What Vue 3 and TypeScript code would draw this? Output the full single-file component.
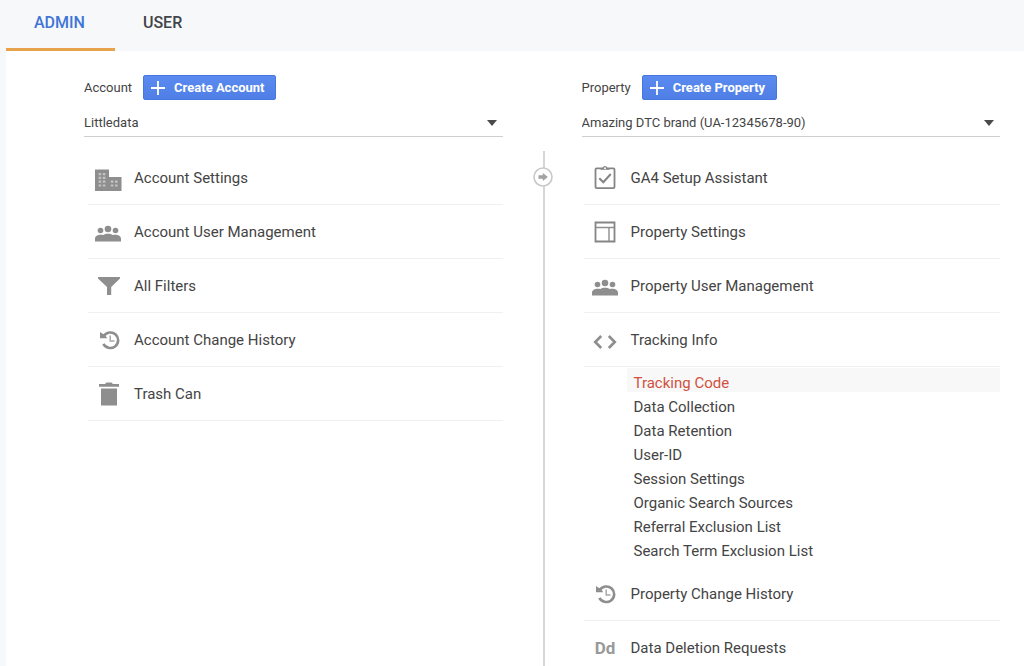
<script setup lang="ts">
import { ref } from 'vue'

type IconName = 'building' | 'people' | 'filter' | 'history' | 'trash' | 'check' | 'layout' | 'code' | 'dd'

interface Item {
  label: string
  icon: IconName
  children?: string[]
}

interface Column {
  id: string
  title: string
  action: string
  selected: string
  items: Item[]
}

const tabs: string[] = ['ADMIN', 'USER']
const activeTab = ref('ADMIN')
const activeChild = ref('Tracking Code')

const columns: Column[] = [
  {
    id: 'account',
    title: 'Account',
    action: 'Create Account',
    selected: 'Littledata',
    items: [
      { label: 'Account Settings', icon: 'building' },
      { label: 'Account User Management', icon: 'people' },
      { label: 'All Filters', icon: 'filter' },
      { label: 'Account Change History', icon: 'history' },
      { label: 'Trash Can', icon: 'trash' },
    ],
  },
  {
    id: 'property',
    title: 'Property',
    action: 'Create Property',
    selected: 'Amazing DTC brand (UA-12345678-90)',
    items: [
      { label: 'GA4 Setup Assistant', icon: 'check' },
      { label: 'Property Settings', icon: 'layout' },
      { label: 'Property User Management', icon: 'people' },
      {
        label: 'Tracking Info',
        icon: 'code',
        children: [
          'Tracking Code',
          'Data Collection',
          'Data Retention',
          'User-ID',
          'Session Settings',
          'Organic Search Sources',
          'Referral Exclusion List',
          'Search Term Exclusion List',
        ],
      },
      { label: 'Property Change History', icon: 'history' },
      { label: 'Data Deletion Requests', icon: 'dd' },
    ],
  },
]
</script>

<template>
  <div class="page">
    <nav class="tabs">
      <button
        v-for="tab in tabs"
        :key="tab"
        type="button"
        class="tab"
        :class="{ active: tab === activeTab }"
        @click="activeTab = tab"
      >{{ tab }}</button>
    </nav>

    <main class="panel">
      <template v-for="(col, index) in columns" :key="col.id">
        <div v-if="index > 0" class="divider">
          <button type="button" class="knob" aria-label="Move between columns">
            <svg viewBox="0 0 20 20" width="20" height="20">
              <circle cx="10" cy="10" r="9" fill="#fff" stroke="#c8c8c8" stroke-width="1.6" />
              <path d="M5.500 8.200h4.300V6l5 4-5 4v-2.200H5.500z" fill="#a2a2a2" />
            </svg>
          </button>
        </div>

        <section class="column" :class="col.id">
          <div class="head">
            <label :for="col.id">{{ col.title }}</label>
            <button type="button" class="create">
              <svg viewBox="0 0 14 14" width="14" height="14"><path d="M7 0v14M0 7h14" stroke="#fff" stroke-width="1.8" /></svg>
              {{ col.action }}
            </button>
          </div>

          <div class="picker">
            <select :id="col.id"><option>{{ col.selected }}</option></select>
            <svg class="caret" viewBox="0 0 10 6" width="10" height="6"><path d="M0 0h10L5 6z" fill="#4a4a4a" /></svg>
          </div>

          <ul class="items">
            <li v-for="item in col.items" :key="item.label">
              <a href="#" class="row" @click.prevent>
                <span class="icon">
                  <svg v-if="item.icon === 'building'" class="low" viewBox="0 0 28 24" width="28" height="24">
                    <path d="M1 1.500h14v7.500h12.500V23H1z" fill="#8e8e8e" />
                    <path d="M4.600 5h2.600v2.200H4.600zM8.800 5h2.600v2.200H8.800zM4.600 8.800h2.600V11H4.600zM8.800 8.800h2.600V11H8.800zM4.600 12.600h2.600v2.200H4.600zM8.800 12.600h2.600v2.200H8.800zM4.600 16.400h2.600v2.200H4.600zM8.800 16.400h2.600v2.200H8.800zM16.800 12.600h2.600v2.200h-2.600zM21 12.600h2.600v2.200H21zM16.800 16.400h2.600v2.200h-2.600zM21 16.400h2.600v2.200H21z" fill="#c2c2c2" />
                  </svg>
                  <svg v-else-if="item.icon === 'people'" class="low" viewBox="0 0 28 18" width="28" height="18">
                    <g fill="#8e8e8e">
                      <circle cx="6.500" cy="5.500" r="2.800" />
                      <circle cx="14" cy="4" r="3.300" />
                      <circle cx="21.500" cy="5.500" r="2.800" />
                      <path d="M1 16.500v-3c0-2.500 3-3.800 5.500-3.800 1.200 0 2 .2 2.800.3C10.500 9.100 12 8.700 14 8.700s3.500.4 4.700 1.300c.8-.1 1.600-.3 2.800-.3 2.500 0 5.500 1.300 5.500 3.800v3z" />
                    </g>
                  </svg>
                  <svg v-else-if="item.icon === 'filter'" viewBox="0 0 22 20" width="22" height="20">
                    <path d="M0 1h22v1.500L13.200 11v8H9v-8L0 2.500z" fill="#8e8e8e" />
                  </svg>
                  <svg v-else-if="item.icon === 'history'" class="shift" viewBox="0 0 20 20" width="20" height="20">
                    <path d="M3.800 6A7.800 7.800 0 1 1 3.400 13.800" fill="none" stroke="#8e8e8e" stroke-width="2.600" />
                    <path d="M0 2l2.200 1.500L4.500 4.500l2.800 3.700H0z" fill="#8e8e8e" />
                    <path d="M10.200 5.500V11h4.300" fill="none" stroke="#a8a8a8" stroke-width="1.500" />
                  </svg>
                  <svg v-else-if="item.icon === 'trash'" viewBox="0 0 20 24" width="20" height="24">
                    <path d="M0 2h6l1.500-1.500h5L14 2h6v2.800H0zM2 6.500h16V23.500H2z" fill="#8e8e8e" />
                  </svg>
                  <svg v-else-if="item.icon === 'check'" class="high" viewBox="0 0 22 24" width="22" height="24">
                    <path d="M2.500 3.400h17q1 0 1 1v17.700q0 1-1 1h-17q-1 0-1-1V4.400q0-1 1-1z" fill="none" stroke="#858585" stroke-width="1.800" />
                    <path d="M6.500 4.800V3h2a2.600 2.600 0 0 1 5 0h2v1.800z" fill="#858585" />
                    <circle cx="11" cy="3.200" r="1" fill="#fff" />
                    <path d="M5.300 13.200l4 4L16.800 9" fill="none" stroke="#858585" stroke-width="2" />
                  </svg>
                  <svg v-else-if="item.icon === 'layout'" viewBox="0 0 22 22" width="22" height="22">
                    <path d="M1.500 1.500h19v19h-19z" fill="none" stroke="#858585" stroke-width="1.800" />
                    <path d="M2 6.500h18M15 6.500V20" fill="none" stroke="#8e8e8e" stroke-width="1.400" />
                  </svg>
                  <svg v-else-if="item.icon === 'code'" class="low" viewBox="0 0 24 16" width="24" height="16">
                    <path d="M8.200 2L2.200 8l6 6M15.800 2l6 6-6 6" fill="none" stroke="#8e8e8e" stroke-width="2.600" />
                  </svg>
                  <b v-else class="dd">Dd</b>
                </span>
                <span>{{ item.label }}</span>
              </a>
              <ul v-if="item.children" class="children">
                <li v-for="child in item.children" :key="child">
                  <a
                    href="#"
                    :class="{ current: child === activeChild }"
                    @click.prevent="activeChild = child"
                  >{{ child }}</a>
                </li>
              </ul>
            </li>
          </ul>
        </section>
      </template>
    </main>
  </div>
</template>

<style>
body {
  margin: 0;
  background: #f7f8fa;
}
</style>

<style scoped>
.page {
  box-sizing: border-box;
  min-height: 100vh;
  padding-left: 6px;
  display: flex;
  flex-direction: column;
  background: #f7f8fa;
  color: #444;
  font-family: Roboto, "Liberation Sans", sans-serif;
}
button,
select {
  font-family: inherit;
  border: 0;
  margin: 0;
}
a {
  color: inherit;
  text-decoration: none;
}
ul {
  list-style: none;
  margin: 0;
  padding: 0;
}
svg {
  display: block;
}
.tabs {
  display: flex;
}
.tab {
  box-sizing: border-box;
  height: 51px;
  padding: 0 30px 3px 28px;
  background: none;
  color: #414549;
  font-size: 16px;
  font-weight: 500;
  border-bottom: 3px solid transparent;
}
.tab.active {
  color: #3f74d8;
  border-color: #e8a24b;
}
.panel {
  flex: 1;
  display: flex;
  padding: 24px 24px 0 78px;
  background: #fff;
}
.column {
  flex: 1;
  min-width: 0;
}
.head {
  display: flex;
  align-items: center;
  gap: 11px;
  height: 25px;
  font-size: 13px;
}
.create {
  display: flex;
  align-items: center;
  gap: 9px;
  height: 25px;
  padding: 0 11px 0 7px;
  border: 1px solid #4677df;
  border-radius: 2px;
  background: linear-gradient(#5b8bf0, #4f7fe6);
  color: #fff;
  font-size: 13px;
  font-weight: 700;
}
.picker {
  display: flex;
  align-items: center;
  height: 36px;
  border-bottom: 1px solid #cfcfcf;
}
.picker select {
  flex: 1;
  height: 28px;
  margin-top: 8px;
  padding: 0;
  appearance: none;
  background: none;
  color: #444;
  font-size: 13px;
}
.caret {
  margin: 9px 6px 0 0;
  pointer-events: none;
}
.items {
  padding: 14px 0 0 4px;
}
.property .items {
  padding-left: 2px;
}
.row {
  box-sizing: border-box;
  display: flex;
  align-items: center;
  height: 54px;
  border-bottom: 1px solid #f0f0f0;
  color: #444;
  font-size: 15px;
}
.icon {
  width: 42px;
  margin-right: 4px;
  display: flex;
  justify-content: center;
  flex: none;
}
.property .icon {
  width: 43px;
}
.low {
  margin: 4px 2px 0 0;
}
.property .low {
  margin-right: 0;
}
.high {
  margin-bottom: 2px;
}
.shift {
  margin-left: 2px;
}
.dd {
  color: #999;
  font-size: 17px;
}
.children {
  margin: 0 0 7px 43px;
  padding-top: 1px;
}
.children a {
  display: block;
  padding: 6px 0 0 7px;
  font-size: 15px;
  line-height: 18px;
}
.children .current {
  background: #f8f8f8;
  color: #d0513f;
}
.divider {
  width: 79px;
  margin-top: 76px;
  display: flex;
  justify-content: center;
  background: linear-gradient(#d6d6d6, #d6d6d6) 40px 0 / 2px 100% no-repeat;
}
.knob {
  width: 20px;
  height: 20px;
  margin: 16px 0 0 2px;
  padding: 0;
  background: none;
}
</style>
